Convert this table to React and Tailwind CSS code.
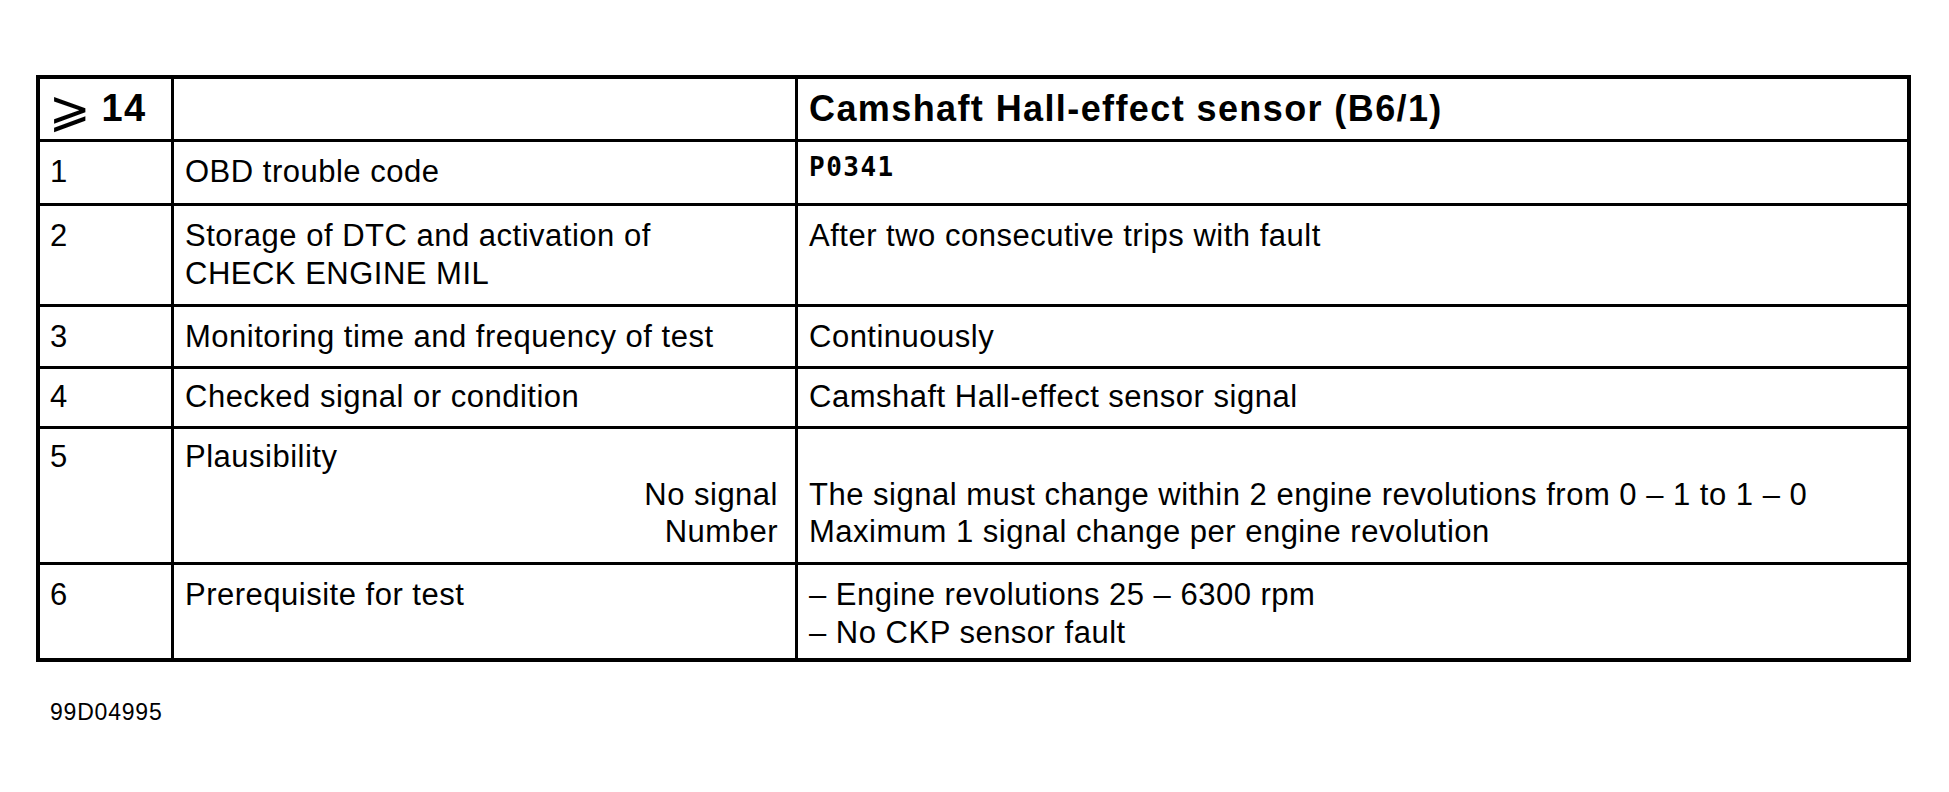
const ROWS = [
  {
    n: '1',
    h: 'h-[64px]',
    pt: 'pt-[11px]',
    label: ['OBD trouble code'],
    value: 'code',
  },
  {
    n: '2',
    h: 'h-[101px]',
    pt: 'pt-[11px]',
    label: ['Storage of DTC and activation of', 'CHECK ENGINE MIL'],
    value: ['After two consecutive trips with fault'],
  },
  {
    n: '3',
    h: 'h-[62px]',
    pt: 'pt-[11px]',
    label: ['Monitoring time and frequency of test'],
    value: ['Continuously'],
  },
  {
    n: '4',
    h: 'h-[60px]',
    pt: 'pt-[9px]',
    label: ['Checked signal or condition'],
    value: ['Camshaft Hall-effect sensor signal'],
  },
  {
    n: '5',
    h: 'h-[136px]',
    pt: 'pt-[9px]',
    label: ['Plausibility'],
    sub: ['No signal', 'Number'],
    value: [
      '\u00a0',
      'The signal must change within 2 engine revolutions from 0 \u2013 1 to 1 \u2013 0',
      'Maximum 1 signal change per engine revolution',
    ],
  },
  {
    n: '6',
    h: 'h-[93px]',
    pt: 'pt-[11px]',
    label: ['Prerequisite for test'],
    value: ['\u2013 Engine revolutions 25 \u2013 6300 rpm', '\u2013 No CKP sensor fault'],
    last: true,
  },
]

function Row({ row }) {
  return (
    <div className={`flex border-black ${row.h} ${row.last ? '' : 'border-b-[3px]'}`}>
      <div className={`w-[134px] shrink-0 border-r-[3px] border-black pl-[10px] ${row.pt}`}>
        {row.n}
      </div>
      <div className={`w-[624px] shrink-0 border-r-[3px] border-black pl-[11px] pr-[17px] ${row.pt}`}>
        {row.label.map((l) => (
          <div key={l}>{l}</div>
        ))}
        {row.sub &&
          row.sub.map((s) => (
            <div key={s} className="text-right">
              {s}
            </div>
          ))}
      </div>
      <div className={`flex-1 pl-[11px] ${row.pt}`}>
        {row.value === 'code' ? (
          <div className="pt-[1px] font-['DejaVu_Sans_Mono',monospace] font-bold text-[26px] leading-[26px] tracking-[1.5px]">
            P0341
          </div>
        ) : (
          row.value.map((v, i) => <div key={i}>{v}</div>)
        )}
      </div>
    </div>
  )
}

export default function App() {
  return (
    <div className="min-h-screen bg-white pt-[75px] pl-[36px] font-['Liberation_Sans',Arial,sans-serif] text-[31px] leading-[37.5px] tracking-[0.5px] text-black">
      <div className="w-[1875px] border-[4px] border-black">
        <div className="flex h-[63px] border-b-[3px] border-black">
          <div className="w-[134px] shrink-0 border-r-[3px] border-black pl-[9px] flex items-center gap-[10px]">
            <span className="font-['DejaVu_Sans',sans-serif] text-[50px] leading-none">{'\u2A7E'}</span>
            <span className="font-bold text-[38px] tracking-[1.5px]">14</span>
          </div>
          <div className="w-[624px] shrink-0 border-r-[3px] border-black" />
          <div className="flex-1 pl-[11px] flex items-center font-bold text-[36px] tracking-[1.4px]">
            Camshaft Hall-effect sensor (B6/1)
          </div>
        </div>
        {ROWS.map((row) => (
          <Row key={row.n} row={row} />
        ))}
      </div>
      <p className="mt-[36px] pl-[14px] text-[23px] leading-[28px] tracking-[0.8px]">99D04995</p>
    </div>
  )
}
